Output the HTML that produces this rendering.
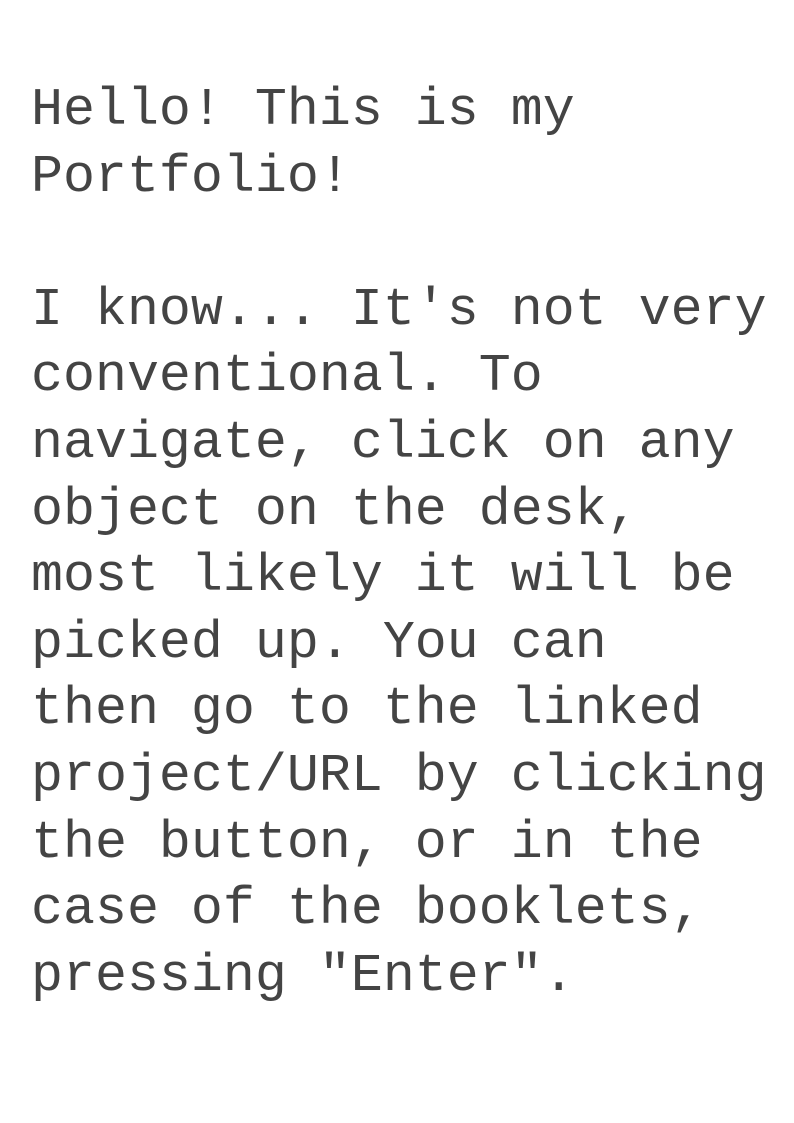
<!DOCTYPE html>
<html><head><meta charset="utf-8"><style>
html,body{margin:0;padding:0;background:#fff;width:794px;height:1123px;overflow:hidden}
div{position:absolute;left:31px;top:78px;width:760px;font-family:"Liberation Mono",monospace;font-size:53.3px;line-height:66.6px;color:#444;white-space:pre}
</style></head><body><div>Hello! This is my
Portfolio!

I know... It's not very
conventional. To
navigate, click on any
object on the desk,
most likely it will be
picked up. You can
then go to the linked
project/URL by clicking
the button, or in the
case of the booklets,
pressing "Enter".</div></body></html>
